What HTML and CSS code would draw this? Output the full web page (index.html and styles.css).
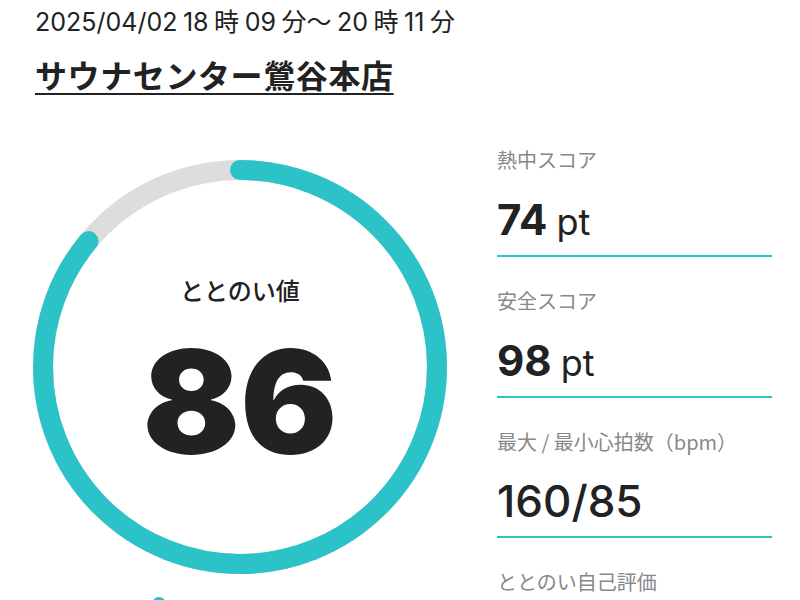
FILE: index.html
```html
<!DOCTYPE html>
<html lang="ja">
<head>
    <meta charset="UTF-8">
    <meta name="viewport" content="width=device-width, initial-scale=1.0">
    <title>サウナ記録 - サウナセンター鶯谷本店</title>
    <link rel="stylesheet" href="styles.css">
</head>
<body>

    <div class="page">
        <header class="visit">
            <p class="visit-time">2025/04/02 18 時 09 分～ 20 時 11 分</p>
            <h1 class="facility"><a href="#">サウナセンター鶯谷本店</a></h1>
        </header>

        <main class="result">
            <section class="gauge-wrap">
                <div class="gauge">
                    <svg class="gauge-ring" width="414" height="414" viewBox="0 0 414 414">
                        <circle class="track" cx="207" cy="207" r="197"></circle>
                        <!-- 2πr = 1237.79, 86% = 1064.5 -->
                        <circle class="value" cx="207" cy="207" r="197"
                            stroke-dasharray="1064.5 1237.8" transform="rotate(-90 207 207)"></circle>
                    </svg>
                    <div class="gauge-center">
                        <span class="gauge-label">ととのい値</span>
                        <span class="gauge-num">86</span>
                    </div>
                </div>
                <div class="gauge-foot"><span class="dot"></span></div>
            </section>

            <ul class="scores">
                <li class="score">
                    <span class="score-label">熱中スコア</span>
                    <span class="score-value"><b>74</b><small>pt</small></span>
                </li>
                <li class="score">
                    <span class="score-label">安全スコア</span>
                    <span class="score-value"><b>98</b><small>pt</small></span>
                </li>
                <li class="score">
                    <span class="score-label">最大 / 最小心拍数（bpm）</span>
                    <span class="score-value plain">160/85</span>
                </li>
                <li class="score">
                    <span class="score-label">ととのい自己評価</span>
                </li>
            </ul>
        </main>
    </div>

</body>
</html>
```

FILE: styles.css
```css
body {
    font-family: 'Inter', 'Noto Sans CJK JP', sans-serif;
    color: #222;
    background: #fff;
    margin: 0;
    overflow: hidden;
}
.page {
    padding: 0 28px 0 35px;
}
.visit-time {
    margin: 0;
    padding-top: 6px;
    font-size: 25px;
    line-height: 32px;
    word-spacing: -1.5px;
}
.facility {
    margin: 16px 0 0;
    font-family: 'Noto Sans CJK JP', sans-serif;
    font-size: 32px;
    font-weight: 700;
    line-height: 40px;
    letter-spacing: 0.6px;
}
.facility a {
    color: #222;
    text-decoration: underline;
    text-decoration-thickness: 2px;
    text-underline-offset: 5px;
}
.result {
    display: flex;
    gap: 50px;
    margin-top: 52px;
}
.gauge-wrap {
    margin: 14px 0 0 -2px;
}
.gauge {
    display: grid;
    width: 414px;
    height: 414px;
}
.gauge-ring,
.gauge-center {
    grid-area: 1 / 1;
}
.gauge-ring circle {
    fill: none;
    stroke-width: 20;
}
.gauge-ring .track {
    stroke: #dddddd;
}
.gauge-ring .value {
    stroke: #2bc3c7;
    stroke-linecap: round;
}
.gauge-center {
    display: flex;
    flex-direction: column;
    align-items: center;
    padding-top: 114px;
}
.gauge-label {
    font-family: 'Noto Sans CJK JP', sans-serif;
    font-size: 24px;
    font-weight: 500;
    line-height: 32px;
}
.gauge-num {
    margin-top: 24px;
    font-size: 144px;
    font-weight: 900;
    line-height: 1;
}
.gauge-foot {
    padding: 23px 0 0 119px;
}
.dot {
    display: block;
    width: 14px;
    height: 14px;
    border-radius: 50%;
    background: #2bc3c7;
}
.scores {
    flex: 0 0 275px;
    list-style: none;
    margin: 0;
    padding: 0;
}
.score {
    display: flex;
    flex-direction: column;
    padding-bottom: 9px;
    margin-bottom: 30px;
    border-bottom: 2px solid #2bc3c7;
}
.score-label {
    font-family: 'Noto Sans CJK JP', sans-serif;
    font-size: 20px;
    line-height: 28px;
    color: #888;
}
.score-value {
    margin-top: 19px;
    font-size: 44px;
    line-height: 52px;
}
.score-value b {
    font-size: 42px;
    font-weight: 700;
}
.score-value small {
    margin-left: 9px;
    font-size: 36px;
    font-weight: 400;
    line-height: 1;
}
.score-value.plain {
    font-weight: 500;
}
```
